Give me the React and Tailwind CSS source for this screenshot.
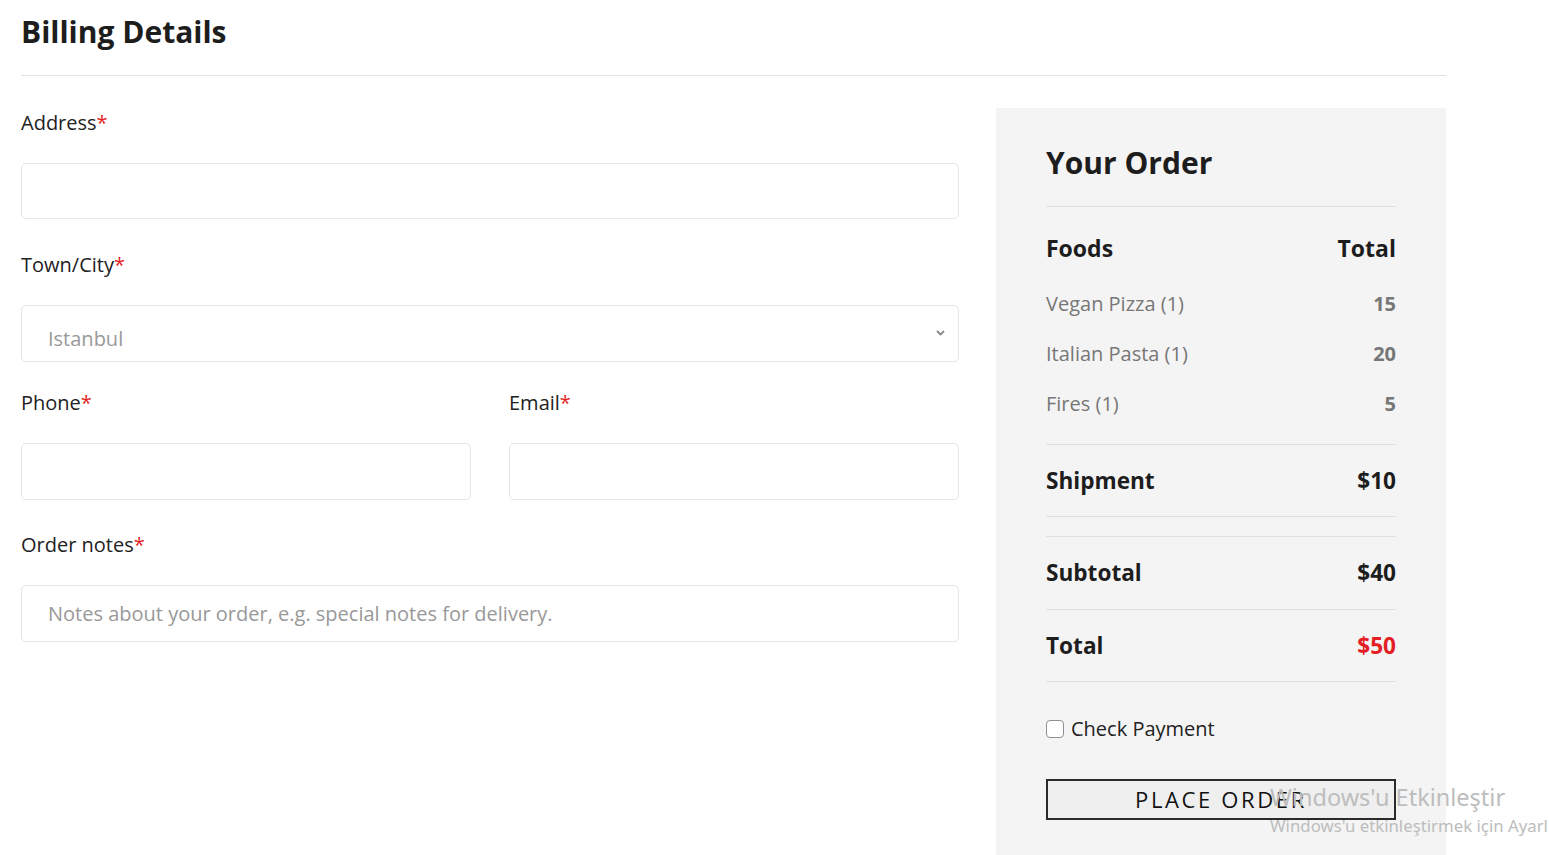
import { useState } from 'react';

function Label({ children }) {
    return (
        <label className="block pt-[1px] text-[20px] leading-[30px] text-[#222]">
            {children}
            <span className="text-[#e31e24]">*</span>
        </label>
    );
}

const inputCls =
    'block w-full h-[57px] rounded-[5px] border border-[#e6e6e6] bg-white px-[26px] text-[20px] text-[#999] outline-none';

export default function App() {
    const [checked, setChecked] = useState(false);

    const items = [
        ['Vegan Pizza (1)', '15'],
        ['Italian Pasta (1)', '20'],
        ['Fires (1)', '5'],
    ];

    return (
        <div className="relative min-h-screen bg-white font-['Open_Sans',sans-serif] overflow-hidden">
            <div className="ml-[21px] w-[1425px]">
                {/* Baslik */}
                <h2 className="pt-[11px] pb-[22px] text-[30px] leading-[42px] font-bold text-[#1d1d1d]">
                    Billing Details
                </h2>
                <div className="border-t border-[#e3e3e3]" />

                <div className="flex justify-between pt-[32px]">
                    {/* Form */}
                    <div className="w-[938px] -mt-[1px]">
                        <Label>Address</Label>
                        <div className="mt-[25px] h-[56px] rounded-[5px] border border-[#e6e6e6] bg-white" />

                        <div className="mt-[30px]">
                            <Label>Town/City</Label>
                        </div>
                        <div className="relative mt-[25px]">
                            <div className={inputCls + ' flex items-center pt-[10px]'}>Istanbul</div>
                            <svg
                                className="absolute right-[14px] top-[25px]"
                                width="9"
                                height="6"
                                viewBox="0 0 9 6"
                            >
                                <path d="M1 1l3.5 3.5L8 1" stroke="#888" strokeWidth="1.8" fill="none" />
                            </svg>
                        </div>

                        <div className="mt-[25px] grid grid-cols-2 gap-x-[38px]">
                            <div>
                                <Label>Phone</Label>
                                <div className="mt-[25px] h-[57px] rounded-[5px] border border-[#e6e6e6] bg-white" />
                            </div>
                            <div>
                                <Label>Email</Label>
                                <div className="mt-[25px] h-[57px] rounded-[5px] border border-[#e6e6e6] bg-white" />
                            </div>
                        </div>

                        <div className="mt-[29px]">
                            <Label>Order notes</Label>
                        </div>
                        <div className="mt-[25px]">
                            <div className={inputCls + ' flex items-center pt-[1px]'}>
                                Notes about your order, e.g. special notes for delivery.
                            </div>
                        </div>
                    </div>

                    {/* Pesanan */}
                    <aside className="w-[450px] bg-[#f4f4f4] px-[50px] pt-[35px] pb-[40px] min-h-[760px]">
                        <h3 className="text-[30px] leading-[40px] font-bold text-[#1d1d1d]">Your Order</h3>
                        <div className="mt-[23px] border-t border-[#e0e0e0]" />

                        <div className="mt-[26px] flex justify-between text-[23px] leading-[30px] font-bold text-[#1d1d1d]">
                            <span>Foods</span>
                            <span>Total</span>
                        </div>

                        <div className="mt-[27px] space-y-[22px]">
                            {items.map(([name, price]) => (
                                <div key={name} className="flex justify-between text-[20px] leading-[28px] text-[#777]">
                                    <span>{name}</span>
                                    <span className="font-bold">{price}</span>
                                </div>
                            ))}
                        </div>

                        <div className="mt-[26px] border-t border-[#e0e0e0]" />
                        <div className="flex justify-between pt-[21px] pb-[20px] text-[22.6px] leading-[30px] font-bold text-[#1d1d1d]">
                            <span>Shipment</span>
                            <span>$10</span>
                        </div>
                        <div className="border-t border-[#e0e0e0]" />
                        <div className="mt-[19px] border-t border-[#e0e0e0]" />
                        <div className="flex justify-between pt-[21px] pb-[21px] text-[22.6px] leading-[30px] font-bold text-[#1d1d1d]">
                            <span>Subtotal</span>
                            <span>$40</span>
                        </div>
                        <div className="border-t border-[#e0e0e0]" />
                        <div className="flex justify-between pt-[21px] pb-[20px] text-[22.6px] leading-[30px] font-bold text-[#1d1d1d]">
                            <span>Total</span>
                            <span className="text-[#e31e24]">$50</span>
                        </div>
                        <div className="border-t border-[#e0e0e0]" />

                        <label className="mt-[32px] flex items-center gap-[7px] text-[20px] leading-[30px] text-[#222]">
                            <input
                                type="checkbox"
                                checked={checked}
                                onChange={() => setChecked(!checked)}
                                className="h-[18px] w-[18px] appearance-none rounded-[4px] border border-[#8f8f8f] bg-white"
                            />
                            Check Payment
                        </label>

                        <button className="mt-[35px] h-[41px] w-full border-2 border-[#2a2a2a] bg-[#efefef] pb-[1px] text-[22px] tracking-[0.12em] text-[#111]">
                            PLACE ORDER
                        </button>
                    </aside>
                </div>
            </div>

            {/* Watermark Windows */}
            <div className="pointer-events-none absolute left-[1270px] top-[780px] font-['Noto_Sans',sans-serif] text-[#bdbdbd] whitespace-nowrap">
                <div className="text-[23.5px] leading-[34px]">Windows'u Etkinleştir</div>
                <div className="text-[16.8px] leading-[24px]">Windows'u etkinleştirmek için Ayarl</div>
            </div>
        </div>
    );
}
